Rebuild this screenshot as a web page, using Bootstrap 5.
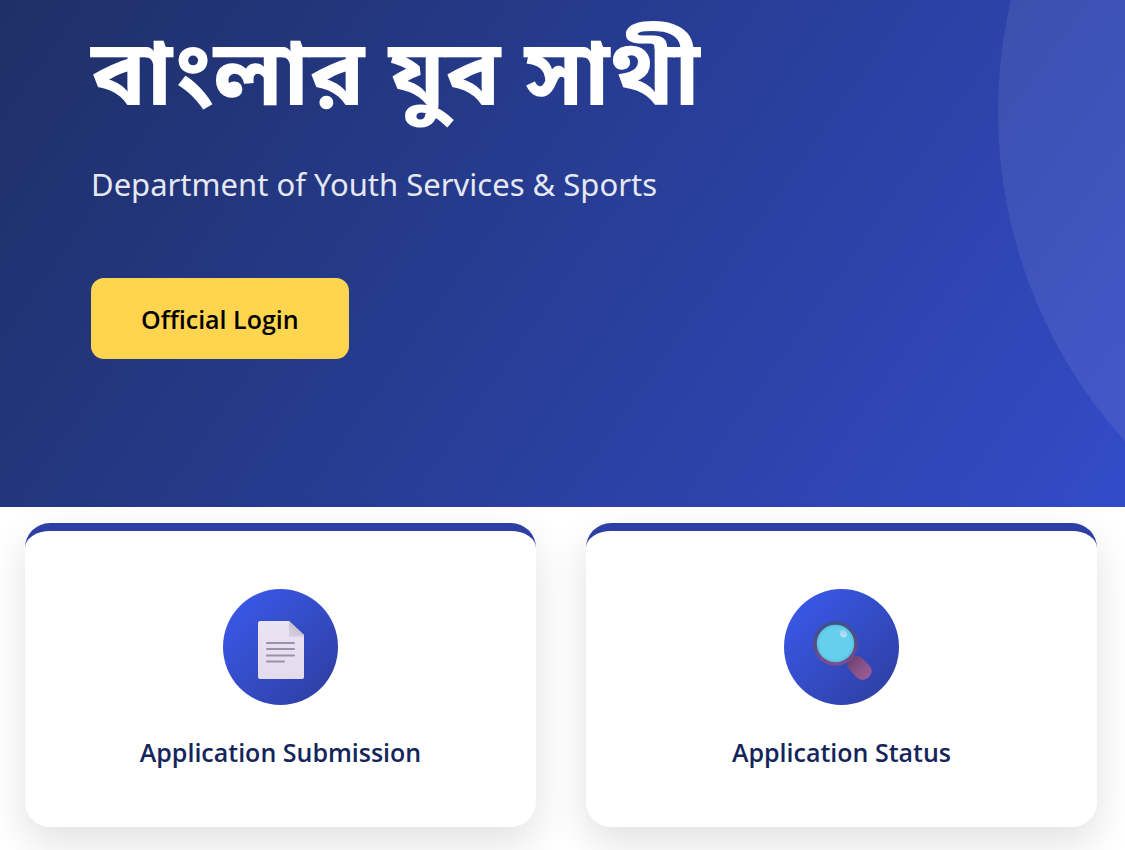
<!DOCTYPE html>
<html lang="en">
<head>
<meta charset="utf-8">
<meta name="viewport" content="width=device-width, initial-scale=1">
<title>বাংলার যুব সাথী</title>
<link href="https://cdn.jsdelivr.net/npm/bootstrap@5.3.0/dist/css/bootstrap.min.css" rel="stylesheet">
<style>
  body { font-family: "Open Sans", "Noto Sans", sans-serif; background: #fff; }
  .hero { background: linear-gradient(125deg, #1f2f66 0%, #253a8a 38%, #334bc8 100%); padding: 8px 91px 148px; }
  .hero::after { content: ""; position: absolute; width: 980px; height: 980px; top: -378px; left: calc(100% - 127px); border-radius: 50%; background: rgba(255, 255, 255, .08); }
  .hero-title { font-family: "Noto Sans Bengali", "Noto Sans", sans-serif; font-size: 92px; line-height: 148px; font-weight: 700; }
  .hero-sub { font-family: "Noto Sans", sans-serif; font-size: 31px; line-height: 48px; margin: 4px 0 70px; color: #e5e8f3; }
  .btn-login { --bs-btn-bg: #ffd54f; --bs-btn-color: #000; --bs-btn-hover-bg: #ffca28; --bs-btn-border-width: 0; font-size: 25px; line-height: 33px; font-weight: 600; padding: 25px 50px 23px; border-radius: 13px; }
  .services { padding: 16px 28px 50px 25px; gap: 50px; }
  .service { border: 0; border-top: 8px solid #2d3fa5; border-radius: 25px; padding: 58px 24px; box-shadow: 0 16px 40px rgba(0, 0, 0, .12); color: #14255c; }
  .service-icon { width: 115px; height: 116px; padding-top: 6px; border-radius: 50%; background: linear-gradient(135deg, #3b5bf0, #2d3d9c); }
  .service-title { font-size: 25px; line-height: 32px; font-weight: 600; margin: 31px 0 1px; }
</style>
</head>
<body>
<header class="hero position-relative overflow-hidden text-white">
  <h1 class="hero-title mb-0">বাংলার যুব সাথী</h1>
  <p class="hero-sub">Department of Youth Services &amp; Sports</p>
  <button type="button" class="btn btn-login">Official Login</button>
</header>
<main class="services d-flex">
  <a href="#submission" class="service card flex-fill w-50 align-items-center text-center text-decoration-none">
    <span class="service-icon d-flex align-items-center justify-content-center">
      <svg width="64" height="64" viewBox="0 0 64 64" aria-hidden="true">
        <defs>
          <linearGradient id="paper" x2="0" y2="1"><stop stop-color="#ebe4f3"/><stop offset="1" stop-color="#e4daee"/></linearGradient>
          <linearGradient id="fold" x1="0" y1="1" x2="1" y2="0"><stop stop-color="#d9d0de"/><stop offset="1" stop-color="#b9b5c4"/></linearGradient>
        </defs>
        <path d="M11 3H40L55 17V59Q55 61 53 61H11Q9 61 9 59V5Q9 3 11 3Z" fill="url(#paper)"/>
        <path d="M40 3L55 17H42Q40 17 40 15Z" fill="url(#fold)"/>
        <path d="M40 16Q40 18 42 18H55" fill="none" stroke="#cabbdc"/>
        <path d="M18 25H45M18 31H45M18 37.500H45M18 43.500H35" stroke="#9b91a7" stroke-width="2" stroke-linecap="round"/>
      </svg>
    </span>
    <h2 class="service-title">Application Submission</h2>
  </a>
  <a href="#status" class="service card flex-fill w-50 align-items-center text-center text-decoration-none">
    <span class="service-icon d-flex align-items-center justify-content-center">
      <svg width="64" height="64" viewBox="0 0 64 64" aria-hidden="true">
        <defs>
          <linearGradient id="rim" x2="0" y2="1"><stop stop-color="#40528b"/><stop offset=".5" stop-color="#594b80"/><stop offset="1" stop-color="#7c4d8c"/></linearGradient>
          <linearGradient id="handle" x1="0" y1="0" x2="1" y2="1"><stop stop-color="#633d6b"/><stop offset=".45" stop-color="#845085"/><stop offset="1" stop-color="#a05f9b"/></linearGradient>
          <radialGradient id="lens"><stop offset=".75" stop-color="#65d0ec"/><stop offset="1" stop-color="#4db9dc"/></radialGradient>
          <linearGradient id="shine" x1="1" y1="0" x2="0" y2="1"><stop stop-color="#8fc9ee"/><stop offset="1" stop-color="#c5e6fa"/></linearGradient>
        </defs>
        <path d="M38 38L46 46" stroke="#613e70" stroke-width="6"/>
        <path d="M43 39Q47 36 52 40L58 46Q65 53 59 59Q53 65 46 59L40 52Q35 47 39 43Z" fill="url(#handle)"/>
        <circle cx="25.500" cy="25.500" r="20.500" fill="url(#lens)" stroke="url(#rim)" stroke-width="3.500"/>
        <ellipse cx="33.500" cy="15.500" rx="3.500" ry="4" transform="rotate(-35 33.500 15.500)" fill="url(#shine)"/>
      </svg>
    </span>
    <h2 class="service-title">Application Status</h2>
  </a>
</main>
<script src="https://cdn.jsdelivr.net/npm/bootstrap@5.3.0/dist/js/bootstrap.bundle.min.js"></script>
</body>
</html>
